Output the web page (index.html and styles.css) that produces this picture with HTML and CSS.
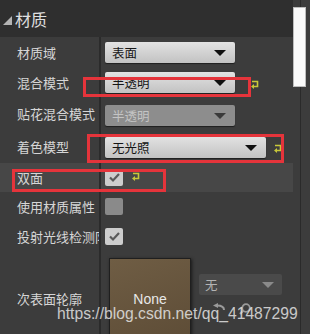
FILE: index.html
```html
<!DOCTYPE html>
<html lang="zh">
<head>
  <meta charset="UTF-8">
  <title>材质</title>
  <link rel="stylesheet" href="styles.css">
</head>
<body>
  <div class="panel">
    <div class="main">
      <div class="header">
        <svg class="caret" width="9" height="9" viewBox="0 0 9 9"><polygon points="9,0 9,9 0,9" fill="#b4b4b4"/></svg>
        <span>材质</span>
      </div>

      <div class="row r1">
        <div class="label">材质域</div>
        <div class="value">
          <div class="combo w130">表面<i class="arrow"></i></div>
        </div>
      </div>
      <div class="row r2">
        <div class="label">混合模式</div>
        <div class="value">
          <div class="combo w130">半透明<i class="arrow"></i></div>
          <svg class="reset" width="9" height="10" viewBox="0 0 9 10"><path d="M1 2.5 H6.5 V7.5 H2" fill="none" stroke="#c8c83a" stroke-width="1.6"/><polygon points="0,7.5 3,5 3,10" fill="#c8c83a"/></svg>
        </div>
      </div>
      <div class="row r3">
        <div class="label">贴花混合模式</div>
        <div class="value">
          <div class="combo w130 disabled">半透明<i class="arrow"></i></div>
        </div>
      </div>
      <div class="row r4">
        <div class="label">着色模型</div>
        <div class="value">
          <div class="combo w161">无光照<i class="arrow"></i></div>
          <svg class="reset" width="9" height="10" viewBox="0 0 9 10"><path d="M1 2.5 H6.5 V7.5 H2" fill="none" stroke="#c8c83a" stroke-width="1.6"/><polygon points="0,7.5 3,5 3,10" fill="#c8c83a"/></svg>
        </div>
      </div>
      <div class="row r5 active">
        <div class="label">双面</div>
        <div class="value">
          <div class="check on"><svg width="13" height="11" viewBox="0 0 13 11"><path d="M2 5.5 L5 8.5 L11 2" fill="none" stroke="#5a5a5a" stroke-width="2.2"/></svg></div>
          <svg class="reset small" width="9" height="10" viewBox="0 0 9 10"><path d="M1 2.5 H6.5 V7.5 H2" fill="none" stroke="#c8c83a" stroke-width="1.6"/><polygon points="0,7.5 3,5 3,10" fill="#c8c83a"/></svg>
        </div>
      </div>
      <div class="row r6">
        <div class="label">使用材质属性</div>
        <div class="value">
          <div class="check off"></div>
        </div>
      </div>
      <div class="row r7">
        <div class="label clip">投射光线检测阴影</div>
        <div class="value">
          <div class="check on"><svg width="13" height="11" viewBox="0 0 13 11"><path d="M2 5.5 L5 8.5 L11 2" fill="none" stroke="#5a5a5a" stroke-width="2.2"/></svg></div>
        </div>
      </div>
      <div class="row texture-row">
        <div class="label">次表面轮廓</div>
        <div class="value tex">
          <div class="thumb">None</div>
          <div class="side">
            <div class="combo dark">无<i class="arrow"></i></div>
            <div class="tools">
              <svg width="12" height="10" viewBox="0 0 12 10"><path d="M11 7 C11 3 8 2.5 4 2.5" fill="none" stroke="#9a9a9a" stroke-width="2"/><polygon points="0,2.5 5,0 5,5" fill="#9a9a9a"/></svg>
              <svg width="12" height="12" viewBox="0 0 12 12"><circle cx="7" cy="5" r="3.8" fill="none" stroke="#9a9a9a" stroke-width="1.8"/><path d="M4.2 7.8 L1 11" stroke="#9a9a9a" stroke-width="2.2"/></svg>
            </div>
          </div>
        </div>
      </div>
    </div>
    <div class="scroll">
      <div class="thumbbar"></div>
    </div>

    <div class="mark m1"></div>
    <div class="mark m2"></div>
    <div class="mark m3"></div>
    <div class="watermark">https://blog.csdn.net/qq_41487299</div>
  </div>
</body>
</html>
```

FILE: styles.css
```css
* {
  box-sizing: border-box;
  margin: 0;
  padding: 0;
}
body {
  background: #3c3c3c;
  font-family: "Noto Sans CJK SC", "Noto Sans", sans-serif;
}
.panel {
  position: relative;
  width: 310px;
  height: 334px;
  display: flex;
  overflow: hidden;
  background: #3c3c3c;
}
.main {
  width: 293px;
}
.header {
  height: 37px;
  background: #2f2f2f;
  display: flex;
  align-items: center;
  padding-left: 3px;
  color: #e0e0e0;
  font-size: 16px;
}
.caret {
  margin-right: 3px;
  margin-top: 3px;
}
.row {
  display: flex;
}
.r1 { height: 30px; }
.r2 { height: 31px; }
.r3 { height: 31px; }
.r4 { height: 34px; }
.r5 { height: 29px; }
.r6 { height: 29px; }
.r7 { height: 30px; }
.row.active {
  background: #474747;
}
.label {
  width: 101px;
  padding-left: 17px;
  display: flex;
  align-items: center;
  color: #d6d6d6;
  font-size: 13px;
  white-space: nowrap;
  border-right: 2px solid #2b2b2b;
}
.label.clip {
  overflow: hidden;
}
.value {
  flex: 1;
  display: flex;
  align-items: center;
  padding-left: 4px;
}
.combo {
  position: relative;
  height: 21px;
  border-radius: 2px;
  background: linear-gradient(#e2e2e2, #c2c2c2);
  box-shadow: 0 1px 1px #1e1e1e;
  color: #151515;
  font-size: 12.5px;
  line-height: 21px;
  padding-left: 7px;
}
.w130 { width: 130px; }
.w161 { width: 161px; margin-top: 3px; }
.combo.disabled {
  background: #8d8d8d;
  color: #c4c4c4;
  margin-top: 4px;
}
.combo.dark {
  width: 83px;
  background: #4a4a4a;
  color: #b4b4b4;
  box-shadow: none;
  padding-left: 6px;
}
.arrow {
  position: absolute;
  right: 9px;
  top: 8px;
  width: 0;
  height: 0;
  border-left: 6px solid transparent;
  border-right: 6px solid transparent;
  border-top: 6px solid #111;
}
.disabled .arrow {
  border-top-color: #3a3a3a;
}
.dark .arrow {
  border-top-color: #8a8a8a;
  right: 8px;
}
.reset {
  margin-left: 16px;
  margin-top: 2px;
}
.r4 .reset {
  margin-left: 8px;
  margin-top: 4px;
}
.reset.small {
  margin-left: 9px;
  margin-top: -4px;
}
.check {
  width: 18px;
  height: 17px;
  border-radius: 2px;
  display: flex;
  align-items: center;
  justify-content: center;
}
.check.on {
  background: #cdcdcd;
}
.check.off {
  background: #8a8a8a;
}
.texture-row {
  height: 83px;
}
.texture-row .label {
  align-items: flex-start;
  padding-top: 38px;
}
.value.tex {
  align-items: flex-start;
  padding-left: 8px;
  padding-top: 7px;
}
.thumb {
  width: 82px;
  height: 80px;
  border: 1px solid #1f1f1f;
  background: linear-gradient(160deg, #6f5d44, #5e4d37);
  box-shadow: 1px 1px 3px #1a1a1a;
  color: #e8e8e8;
  font-family: "Liberation Sans", Arial, sans-serif;
  font-size: 14px;
  text-align: center;
  padding-top: 32px;
}
.side {
  margin-left: 8px;
  padding-top: 16px;
}
.tools {
  display: flex;
  gap: 14px;
  padding-left: 14px;
  padding-top: 8px;
}
.scroll {
  position: relative;
  flex: 1;
}
.scroll::before {
  content: "";
  position: absolute;
  left: 7px;
  top: 0;
  bottom: 0;
  width: 1px;
  background: #2a2a2a;
}
.thumbbar {
  position: relative;
  margin-top: 7px;
  width: 13px;
  height: 80px;
  background: #fafafa;
  border: 1px solid #bdbdbd;
}
.mark {
  position: absolute;
  border: 3px solid #e5343b;
}
.m1 { left: 83px; top: 77px; width: 168px; height: 20px; }
.m2 { left: 87px; top: 134px; width: 197px; height: 29px; }
.m3 { left: 12px; top: 169px; width: 154px; height: 23px; }
.watermark {
  position: absolute;
  left: 57px;
  top: 305px;
  color: rgba(235, 235, 235, 0.82);
  font-family: "Liberation Sans", Arial, sans-serif;
  font-size: 15.7px;
  white-space: nowrap;
}
```
